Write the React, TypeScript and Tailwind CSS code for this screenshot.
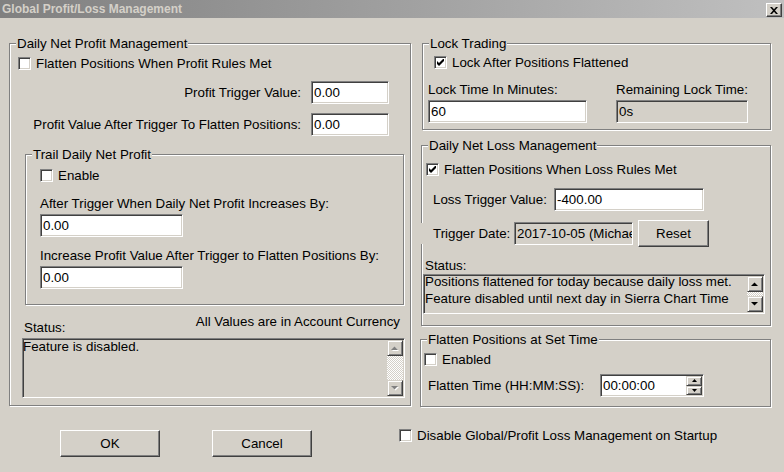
import React from "react";

const SUNKEN =
  "border border-t-[#808080] border-l-[#808080] border-b-white border-r-white shadow-[inset_1px_1px_0_#404040,inset_-1px_-1px_0_#d4d0c8]";
const RAISED =
  "border border-t-white border-l-white border-b-[#404040] border-r-[#404040] shadow-[inset_-1px_-1px_0_#808080]";
const RAISED_SM =
  "border border-t-[#d4d0c8] border-l-[#d4d0c8] border-b-[#404040] border-r-[#404040] shadow-[inset_1px_1px_0_#ffffff,inset_-1px_-1px_0_#808080]";

type P = { className?: string; children?: React.ReactNode };

function Group({ title, className = "", children }: P & { title: string }) {
  return (
    <div
      className={`relative shrink-0 border border-[#808080] shadow-[inset_1px_1px_0_#ffffff,1px_1px_0_#ffffff] ${className}`}
    >
      <span className="absolute left-[6px] top-[-8px] whitespace-nowrap bg-[#d4d0c8] px-[1px] leading-[15px]">
        {title}
      </span>
      {children}
    </div>
  );
}

function CheckBox({ checked = false }: { checked?: boolean }) {
  return (
    <span
      className={`flex h-[13px] w-[13px] shrink-0 items-center justify-center bg-white ${SUNKEN}`}
    >
      {checked && (
        <svg width="7" height="7" viewBox="0 0 7 7">
          <path d="M0 2v3l2 2l5-5v-3l-5 5z" fill="#000" />
        </svg>
      )}
    </span>
  );
}

function CheckRow({
  checked,
  label,
  className = "",
}: {
  checked?: boolean;
  label: string;
  className?: string;
}) {
  return (
    <div className={`flex h-[13px] items-center ${className}`}>
      <CheckBox checked={checked} />
      <span className="ml-[5px] whitespace-nowrap">{label}</span>
    </div>
  );
}

function Field({ className = "", children }: P) {
  return (
    <div
      className={`flex shrink-0 items-center overflow-hidden whitespace-nowrap pl-[2px] ${SUNKEN} ${className}`}
    >
      {children}
    </div>
  );
}

function Button({ className = "", children }: P) {
  return (
    <div
      className={`flex shrink-0 items-center justify-center bg-[#d4d0c8] ${RAISED} ${className}`}
    >
      {children}
    </div>
  );
}

function Arrow({ dir, disabled }: { dir: "up" | "down"; disabled?: boolean }) {
  const pts = dir === "up" ? "0,4 7,4 3.5,0.5" : "0,0 7,0 3.5,3.5";
  return (
    <svg width="8" height="5" viewBox="0 0 8 5">
      {disabled && (
        <polygon points={pts} fill="#ffffff" transform="translate(1,1)" />
      )}
      <polygon points={pts} fill={disabled ? "#808080" : "#000000"} />
    </svg>
  );
}

function ScrollBar({ disabled }: { disabled?: boolean }) {
  return (
    <div className="my-[1px] mr-[1px] flex w-[16px] shrink-0 flex-col">
      <div
        className={`flex h-[16px] w-[16px] shrink-0 items-center justify-center bg-[#d4d0c8] ${RAISED_SM}`}
      >
        <Arrow dir="up" disabled={disabled} />
      </div>
      <div className="flex-1 bg-[repeating-conic-gradient(#d4d0c8_0%_25%,#ffffff_0%_50%)] bg-size-[2px_2px]" />
      <div
        className={`flex h-[16px] w-[16px] shrink-0 items-center justify-center bg-[#d4d0c8] ${RAISED_SM}`}
      >
        <Arrow dir="down" disabled={disabled} />
      </div>
    </div>
  );
}

function SpinBtn({ dir }: { dir: "up" | "down" }) {
  return (
    <div
      className={`flex flex-1 items-center justify-center bg-[#d4d0c8] ${RAISED_SM}`}
    >
      <svg width="5" height="3" viewBox="0 0 5 3">
        <polygon
          points={dir === "up" ? "0,3 5,3 2.5,0" : "0,0 5,0 2.5,3"}
          fill="#000"
        />
      </svg>
    </div>
  );
}

export default function App() {
  return (
    <div className="h-[472px] w-[784px] overflow-hidden bg-[#d4d0c8] font-['Liberation_Sans',Arial,sans-serif] text-[13.33px] leading-[15px] text-black">
      {/* Title bar */}
      <div className="flex h-[18px] items-start justify-between bg-linear-to-r from-[#808080] to-[#c0c0c0]">
        <span className="mt-[2px] pl-[2px] text-[12px] font-bold leading-[14px] text-[#d4d0c8]">
          Global Profit/Loss Management
        </span>
        <div
          className={`mr-[2px] mt-[3px] flex h-[14px] w-[16px] items-center justify-center bg-[#d4d0c8] ${RAISED}`}
        >
          <svg width="8" height="7" viewBox="0 0 8 7">
            <path
              d="M0 0h2l2 2.2l2-2.2h2l-3 3.5l3 3.5h-2l-2-2.2l-2 2.2h-2l3-3.5z"
              fill="#000"
            />
          </svg>
        </div>
      </div>

      {/* Main area */}
      <div className="flex pl-[9px] pt-[25px]">
        {/* Left column */}
        <Group title="Daily Net Profit Management" className="h-[363px] w-[402px]">
          <CheckRow
            className="ml-[8px] mt-[13px]"
            label="Flatten Positions When Profit Rules Met"
          />
          <div className="mr-[21px] mt-[11px] flex h-[23px] items-center justify-end">
            <span className="whitespace-nowrap">Profit Trigger Value:</span>
            <Field className="ml-[10px] h-[23px] w-[78px] bg-white">0.00</Field>
          </div>
          <div className="mr-[21px] mt-[9px] flex h-[23px] items-center justify-end">
            <span className="whitespace-nowrap">
              Profit Value After Trigger To Flatten Positions:
            </span>
            <Field className="ml-[10px] h-[23px] w-[78px] bg-white">0.00</Field>
          </div>

          <Group
            title="Trail Daily Net Profit"
            className="ml-[15px] mt-[18px] h-[151px] w-[379px]"
          >
            <CheckRow className="ml-[14px] mt-[14px]" label="Enable" />
            <div className="ml-[14px] mt-[14px] whitespace-nowrap">
              After Trigger When Daily Net Profit Increases By:
            </div>
            <Field className="ml-[14px] mt-[3px] h-[23px] w-[143px] bg-white">0.00</Field>
            <div className="ml-[14px] mt-[11px] whitespace-nowrap">
              Increase Profit Value After Trigger to Flatten Positions By:
            </div>
            <Field className="ml-[14px] mt-[3px] h-[23px] w-[143px] bg-white">0.00</Field>
          </Group>

          <div className="ml-[14px] mr-[10px] mt-[9px] flex justify-between">
            <span className="mt-[6px]">Status:</span>
            <span className="whitespace-nowrap">All Values are in Account Currency</span>
          </div>
          <div
            className={`ml-[12px] mt-[3px] flex h-[60px] w-[383px] bg-[#d4d0c8] ${SUNKEN}`}
          >
            <div className="flex-1 leading-[16px]">Feature is disabled.</div>
            <ScrollBar disabled />
          </div>
        </Group>

        {/* Right column */}
        <div className="ml-[9px] flex w-[351px] shrink-0 flex-col">
          <Group title="Lock Trading" className="ml-[2px] h-[87px] w-[349px]">
            <CheckRow
              checked
              className="ml-[11px] mt-[12px]"
              label="Lock After Positions Flattened"
            />
            <div className="ml-[5px] mt-[13px] flex">
              <div className="flex w-[159px] flex-col">
                <span className="whitespace-nowrap">Lock Time In Minutes:</span>
                <Field className="mt-[3px] h-[23px] w-[159px] bg-white">60</Field>
              </div>
              <div className="ml-[29px] flex w-[132px] flex-col">
                <span className="whitespace-nowrap">Remaining Lock Time:</span>
                <Field className="mt-[3px] h-[23px] w-[132px] bg-[#d4d0c8]">0s</Field>
              </div>
            </div>
          </Group>

          <Group
            title="Daily Net Loss Management"
            className="ml-[1px] mt-[15px] h-[181px] w-[350px]"
          >
            <CheckRow
              checked
              className="ml-[4px] mt-[17px]"
              label="Flatten Positions When Loss Rules Met"
            />
            <div className="mt-[12px] flex h-[23px] items-center">
              <span className="ml-[11px] w-[121px] whitespace-nowrap">Loss Trigger Value:</span>
              <Field className="h-[23px] w-[150px] bg-white">-400.00</Field>
            </div>
            <div className="mt-[9px] flex h-[27px] items-center">
              <span className="-ml-[2px] flex h-[21px] w-[94px] items-center whitespace-nowrap bg-[#d4d0c8] pl-[13px]">
                Trigger Date:
              </span>
              <Field className="h-[23px] w-[119px] bg-[#d4d0c8]">
                2017-10-05 (Michael)
              </Field>
              <Button className="ml-[5px] h-[27px] w-[71px]">Reset</Button>
            </div>
            <div className="ml-[3px] mt-[11px]">Status:</div>
            <div
              className={`ml-[1px] mt-[1px] flex h-[40px] w-[342px] bg-[#d4d0c8] ${SUNKEN}`}
            >
              <div className="-mt-[2px] flex-1 whitespace-nowrap pl-[1px] leading-[17px]">
                <div>Positions flattened for today because daily loss met.</div>
                <div>Feature disabled until next day in Sierra Chart Time</div>
              </div>
              <ScrollBar />
            </div>
          </Group>

          <Group
            title="Flatten Positions at Set Time"
            className="mt-[13px] h-[68px] w-[351px]"
          >
            <CheckRow className="ml-[3px] mt-[13px]" label="Enabled" />
            <div className="mt-[8px] flex h-[23px] items-center">
              <span className="ml-[7px] w-[172px] whitespace-nowrap">
                Flatten Time (HH:MM:SS):
              </span>
              <div
                className={`flex h-[23px] w-[104px] shrink-0 bg-white pl-[2px] ${SUNKEN}`}
              >
                <span className="flex flex-1 items-center">00:00:00</span>
                <div className="my-[1px] mr-[1px] flex w-[16px] flex-col">
                  <SpinBtn dir="up" />
                  <SpinBtn dir="down" />
                </div>
              </div>
            </div>
          </Group>
        </div>
      </div>

      {/* Bottom row */}
      <div className="mt-[22px] flex items-start pl-[60px]">
        <Button className="mt-[1px] h-[27px] w-[100px]">OK</Button>
        <Button className="ml-[52px] mt-[1px] h-[27px] w-[100px]">Cancel</Button>
        <CheckRow
          className="ml-[87px]"
          label="Disable Global/Profit Loss Management on Startup"
        />
      </div>
    </div>
  );
}
